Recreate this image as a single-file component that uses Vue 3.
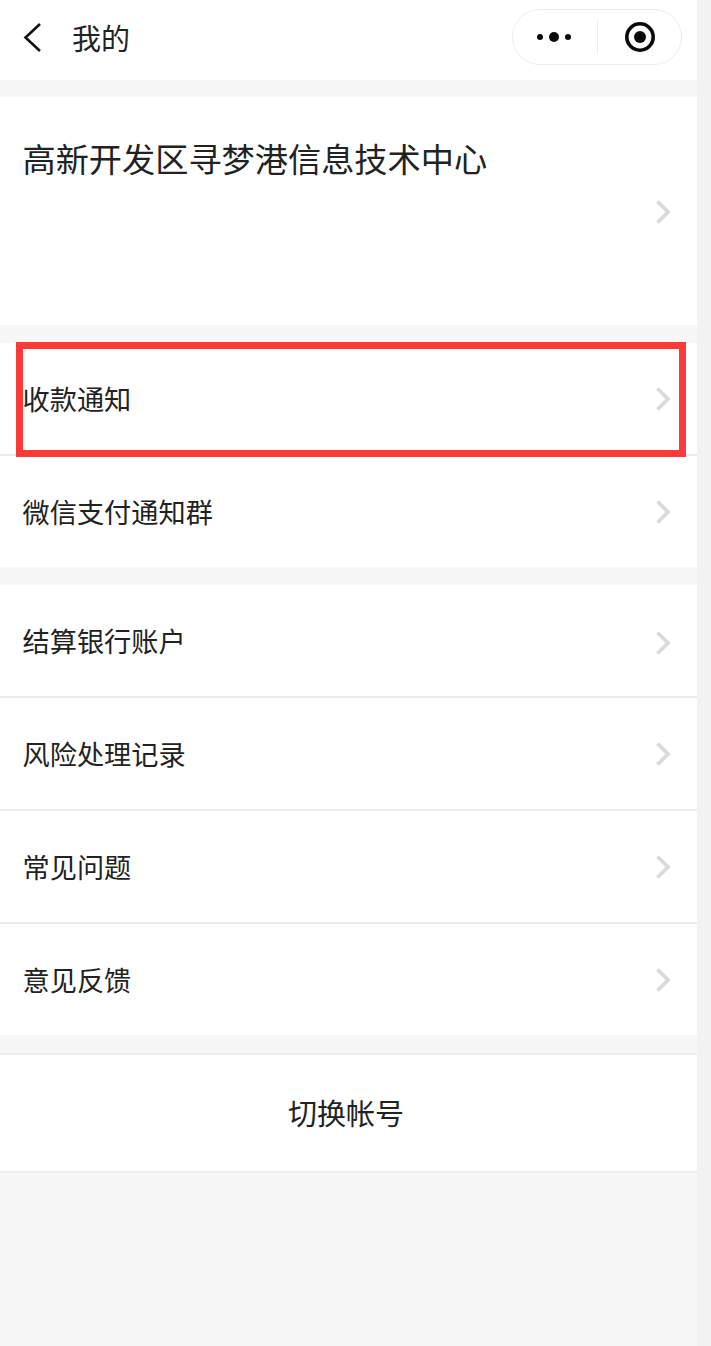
<template>
  <div class="page">
    <div class="main">
      <!-- 顶部导航 -->
      <header class="nav">
        <svg class="back" width="20" height="30" viewBox="0 0 20 30">
          <path d="M18 1 L3.5 14.5 L18 28" fill="none" stroke="#111" stroke-width="2.6" />
        </svg>
        <span class="nav-title">我的</span>
        <div class="capsule">
          <div class="capsule-part more">
            <i class="dot"></i><i class="dot big"></i><i class="dot"></i>
          </div>
          <div class="capsule-line"></div>
          <div class="capsule-part">
            <svg width="32" height="32" viewBox="0 0 32 32">
              <circle cx="16" cy="16" r="13.2" fill="none" stroke="#0a0a0a" stroke-width="3.6" />
              <circle cx="16" cy="16" r="6" fill="#0a0a0a" />
            </svg>
          </div>
        </div>
      </header>

      <!-- 商户名称 -->
      <section class="merchant">
        <div class="merchant-name">高新开发区寻梦港信息技术中心</div>
        <svg class="arrow merchant-arrow" width="16" height="26" viewBox="0 0 16 26">
          <path d="M2.5 2.5 L13 13 L2.5 23.5" fill="none" stroke="#dadada" stroke-width="3.8" />
        </svg>
      </section>

      <section v-for="(group, i) in groups" :key="i" class="group">
        <div v-for="item in group" :key="item.label" class="row" :style="{ height: item.height + 'px' }">
          <span class="row-text">{{ item.label }}</span>
          <svg class="arrow" :style="{ marginTop: item.arrowOffset + 'px' }" width="16" height="26" viewBox="0 0 16 26">
            <path d="M2.5 2.5 L13 13 L2.5 23.5" fill="none" stroke="#dadada" stroke-width="3.8" />
          </svg>
          <!-- 红色标注框 -->
          <div v-if="item.marked" class="mark"></div>
        </div>
      </section>

      <button class="switch"><span>切换帐号</span></button>
    </div>
    <div class="side"></div>
  </div>
</template>

<script setup>
const groups = [
  [
    { label: '收款通知', height: 113, arrowOffset: 0, marked: true },
    { label: '微信支付通知群', height: 111, arrowOffset: 0 }
  ],
  [
    { label: '结算银行账户', height: 113, arrowOffset: 4 },
    { label: '风险处理记录', height: 113, arrowOffset: 0 },
    { label: '常见问题', height: 113, arrowOffset: 0 },
    { label: '意见反馈', height: 111, arrowOffset: 0 }
  ]
]
</script>

<style scoped>
.page {
  display: flex;
  height: 1346px;
  overflow: hidden;
  font-family: "Noto Sans CJK SC", "Liberation Sans", sans-serif;
  color: #222;
}

.main {
  width: 697px;
  background: #f7f7f7;
}

.side {
  width: 14px;
  background: #f2f2f2;
}

.nav {
  height: 80px;
  display: flex;
  align-items: center;
  padding: 0 15px 0 22px;
  background: #fff;
}

.back {
  margin-top: -5px;
}

.nav-title {
  margin-left: 30px;
  margin-top: -6px;
  font-size: 29px;
}

.capsule {
  margin-left: auto;
  margin-top: -6px;
  width: 170px;
  height: 56px;
  box-sizing: border-box;
  display: flex;
  align-items: center;
  border: 1px solid #ececec;
  border-radius: 28px;
}

.capsule-part {
  flex: 1;
  display: flex;
  align-items: center;
  justify-content: center;
}

.more {
  gap: 6px;
  margin-left: -2px;
}

.capsule-part:last-child {
  margin-right: -2px;
}

.dot {
  width: 6px;
  height: 6px;
  border-radius: 50%;
  background: #0a0a0a;
}

.dot.big {
  width: 10px;
  height: 10px;
}

.capsule-line {
  width: 1px;
  height: 34px;
  background: #ececec;
}

.merchant {
  position: relative;
  margin-top: 17px;
  height: 228px;
  background: #fff;
  padding: 39px 0 0 22.5px;
  box-sizing: border-box;
}

.merchant-name {
  font-size: 33.2px;
  line-height: 44px;
}

.merchant-arrow {
  position: absolute;
  right: 26px;
  top: 102px;
}

.group {
  margin-top: 18px;
  background: #fff;
}

.row {
  position: relative;
  display: flex;
  align-items: center;
  justify-content: space-between;
  box-sizing: border-box;
  padding: 0 26px 0 23px;
  font-size: 27.2px;
  border-bottom: 2px solid #ececec;
}

.row:last-child {
  border-bottom: none;
}

.row-text {
  margin-left: -0.5px;
  margin-top: -2px;
}

/* 标注框压在行上方 */
.mark {
  position: absolute;
  left: 16px;
  top: -1px;
  width: 670px;
  height: 115px;
  box-sizing: border-box;
  border: 7px solid #fd3a3a;
}

.switch {
  display: block;
  width: 100%;
  height: 120px;
  margin-top: 18px;
  padding: 0 5px 2px 0;
  background: #fff;
  border: none;
  border-top: 2px solid #ececec;
  border-bottom: 2px solid #ececec;
  font-family: inherit;
  font-size: 29px;
  color: #222;
}
</style>
